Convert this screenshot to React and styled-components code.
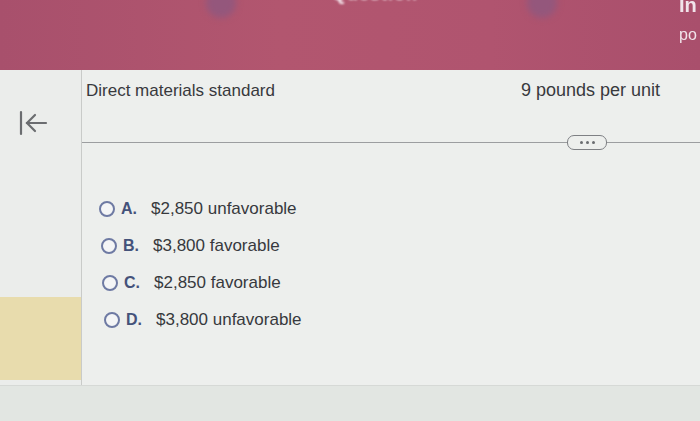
import * as React from "react"
import styled, { createGlobalStyle } from "styled-components"

const GlobalStyle = createGlobalStyle`
  html, body {
    margin: 0;
    padding: 0;
    width: 700px;
    height: 421px;
    overflow: hidden;
    background: #eceeec;
    font-family: "Liberation Sans", Arial, sans-serif;
  }
`

const Page = styled.div`
  width: 700px;
  height: 421px;
  display: flex;
  flex-direction: column;
  overflow: hidden;
`

const Header = styled.header`
  height: 70px;
  flex-shrink: 0;
  background: linear-gradient(90deg, #a8506c 0%, #b2566f 40%, #b0546f 70%, #a94f6c 100%);
  display: grid;
  grid-template-columns: 206px 30px 96px 130px 1fr 30px;
  align-items: start;
  overflow: hidden;
`

const NavBlob = styled.div`
  width: 30px;
  height: 30px;
  margin-top: -12px;
  border-radius: 50%;
  background: #94577c;
  filter: blur(3px);
  grid-column: ${p => p.$col};
`

const Title = styled.div`
  grid-column: 4;
  margin-top: -16px;
  color: #f4e6ec;
  font-weight: bold;
  font-size: 18px;
  letter-spacing: 1px;
  filter: blur(1px);
`

const Corner = styled.div`
  grid-column: 6;
  display: flex;
  flex-direction: column;
  gap: 12px;
  padding-left: 9px;
  color: #f1e3ea;
  filter: blur(0.6px);
  line-height: 18px;
`

const CornerTop = styled.span`
  font-size: 20px;
  font-weight: bold;
  margin-top: -4px;
`

const CornerBottom = styled.span`
  font-size: 16px;
`

const Body = styled.div`
  flex: 1;
  display: flex;
  flex-direction: column;
`

const Panel = styled.div`
  height: 315px;
  display: flex;
`

const Sidebar = styled.aside`
  width: 82px;
  flex-shrink: 0;
  border-right: 1px solid #c9cbc9;
  background: #ebedeb;
  display: flex;
  flex-direction: column;
  justify-content: space-between;
  padding: 38px 0 5px;
  box-sizing: border-box;
`

const BackButton = styled.div`
  padding-left: 18px;
  color: #6b6d70;
`

const Highlight = styled.div`
  height: 83px;
  background: #e8dcad;
`

const Main = styled.main`
  flex: 1;
  display: flex;
  flex-direction: column;
  background: #edefed;
`

const TableRow = styled.div`
  display: flex;
  justify-content: space-between;
  align-items: baseline;
  padding: 10px 40px 0 4px;
  line-height: 20px;
  color: #38393d;
`

const Cell = styled.span`
  font-size: ${p => p.$size || 17}px;
`

const Divider = styled.div`
  margin: 31px 0 0 0;
  height: 20px;
  display: flex;
  align-items: center;
`

const Line = styled.div`
  flex: ${p => p.$grow || 1};
  height: 1px;
  background: #9c9ea0;
`

const Pill = styled.div`
  width: 38px;
  height: 13px;
  border: 1.5px solid #7e8084;
  border-radius: 7px;
  display: flex;
  align-items: center;
  justify-content: center;
  gap: 3px;
`

const Dot = styled.span`
  width: 3px;
  height: 3px;
  border-radius: 50%;
  background: #6a6c70;
`

const Options = styled.ul`
  list-style: none;
  margin: 46px 0 0 17px;
  padding: 0;
  display: flex;
  flex-direction: column;
  gap: 16px;
`

const Option = styled.li`
  display: flex;
  align-items: center;
  height: 21px;
  font-size: 17px;
  color: #37393d;
  padding-left: ${p => p.$shift}px;
`

const Radio = styled.span`
  width: 12px;
  height: 12px;
  border-radius: 50%;
  border: 2px solid #6e7aa3;
  background: #f4f5f6;
  margin-right: 6px;
`

const Letter = styled.span`
  font-weight: bold;
  font-size: 16px;
  color: #44527a;
  width: 30px;
`

const BottomStrip = styled.div`
  flex: 1;
  background: #e2e6e2;
  border-top: 1px solid #d6d9d6;
`

const options = [
  ["A.", "$2,850 unfavorable", 0],
  ["B.", "$3,800 favorable", 2],
  ["C.", "$2,850 favorable", 3],
  ["D.", "$3,800 unfavorable", 5],
]

const CollapseIcon = () => (
  <svg width="30" height="30" viewBox="0 0 30 30" fill="none" stroke="currentColor" strokeWidth="2.2" strokeLinecap="round">
    <path d="M3 4v22" />
    <path d="M28 15H9" />
    <path d="M17 7l-8 8 8 8" />
  </svg>
)

const App = () => {
  return (
    <Page>
      <GlobalStyle />
      <Header>
        <NavBlob $col={2} />
        <Title>Question</Title>
        <NavBlob $col={5} style={{ marginLeft: 65 }} />
        <Corner>
          <CornerTop>In</CornerTop>
          <CornerBottom>po</CornerBottom>
        </Corner>
      </Header>
      <Body>
        <Panel>
          <Sidebar>
            <BackButton>
              <CollapseIcon />
            </BackButton>
            <Highlight />
          </Sidebar>
          <Main>
            <TableRow>
              <Cell>Direct materials standard</Cell>
              <Cell $size={18}>9 pounds per unit</Cell>
            </TableRow>
            <Divider>
              <Line $grow={485} />
              <Pill>
                <Dot />
                <Dot />
                <Dot />
              </Pill>
              <Line $grow={93} />
            </Divider>
            <Options>
              {options.map(([letter, text, shift]) => (
                <Option key={letter} $shift={shift}>
                  <Radio />
                  <Letter>{letter}</Letter>
                  <span>{text}</span>
                </Option>
              ))}
            </Options>
          </Main>
        </Panel>
        <BottomStrip />
      </Body>
    </Page>
  )
}

export default App
